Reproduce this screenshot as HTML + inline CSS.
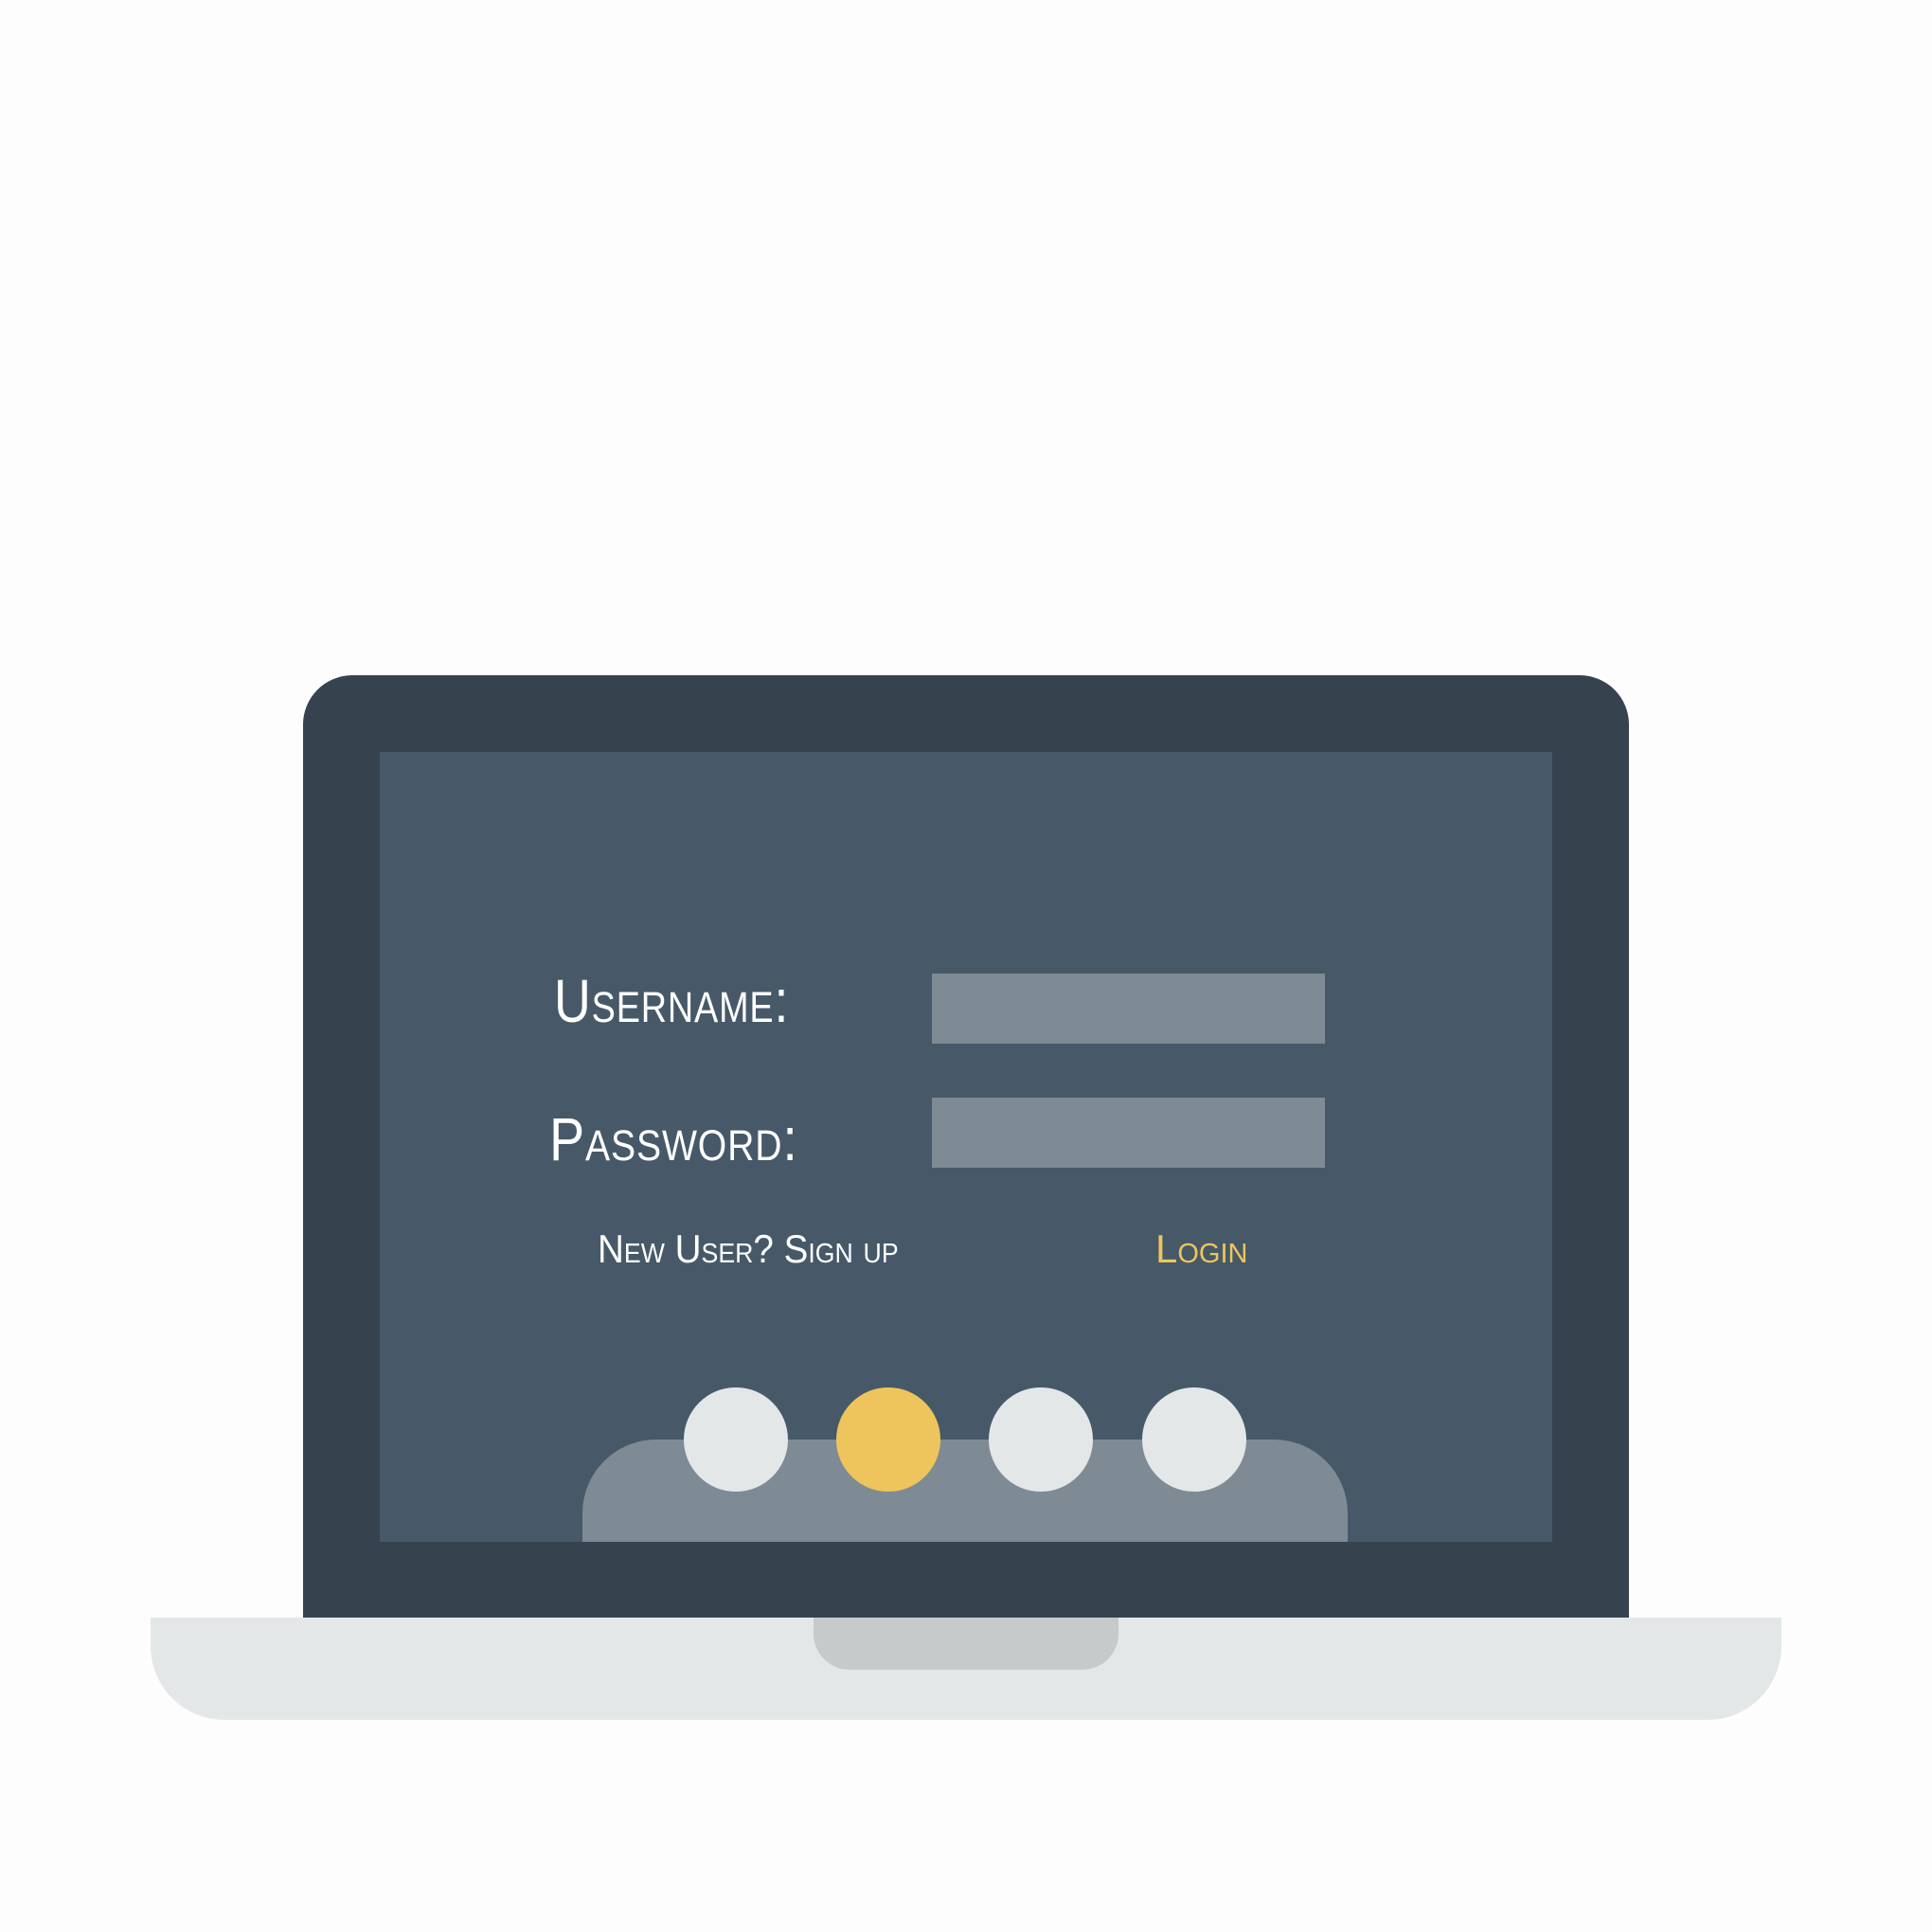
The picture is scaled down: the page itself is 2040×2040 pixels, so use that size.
<!DOCTYPE html>
<html><head><meta charset="utf-8"><style>
html,body{margin:0;padding:0;background:#fdfdfd;}
body{width:2040px;height:2040px;position:relative;overflow:hidden;font-family:"Liberation Sans",sans-serif;}
div{position:absolute;box-sizing:border-box;}
.lid{left:320px;top:713px;width:1400px;height:996px;background:#36434f;border-radius:52px 52px 0 0;}
.scr{left:401px;top:794px;width:1238px;height:834px;background:#475968;overflow:hidden;}
.inp{background:#7f8b94;width:415px;height:74px;left:984px;}
.lbl{color:#fff;font-variant:small-caps;white-space:nowrap;line-height:1;transform-origin:0 0;}
.tray{left:615px;top:1520px;width:808px;height:108px;background:#7f8b94;border-radius:78px 78px 0 0;}
.c{width:110px;height:110px;border-radius:50%;background:#e4e7e8;top:1465px;}
.base{left:159px;top:1708px;width:1722px;height:108px;background:#e4e7e8;border-radius:0 0 78px 78px;}
.notch{left:859px;top:1708px;width:322px;height:55px;background:#c6cacb;border-radius:0 0 38px 38px;}
</style></head><body>
<div class="lid"></div>
<div class="scr"></div>
<div class="tray"></div>
<div class="c" style="left:722px"></div>
<div class="c" style="left:883px;background:#eec55c"></div>
<div class="c" style="left:1044px"></div>
<div class="c" style="left:1206px"></div>
<div class="inp" style="top:1028px"></div>
<div class="inp" style="top:1159px"></div>
<div class="lbl" style="left:585px;top:1025px;font-size:64px;letter-spacing:1px;transform:scaleX(0.84)">Username:</div>
<div class="lbl" style="left:580px;top:1171px;font-size:64px;letter-spacing:1px;transform:scaleX(0.87)">Password:</div>
<div class="lbl" style="left:631px;top:1298px;font-size:42px;transform:scaleX(0.92)">New User? Sign up</div>
<div class="lbl" style="left:1220px;top:1298px;font-size:42px;color:#eec55c">Login</div>
<div class="base"></div>
<div class="notch"></div>
</body></html>
